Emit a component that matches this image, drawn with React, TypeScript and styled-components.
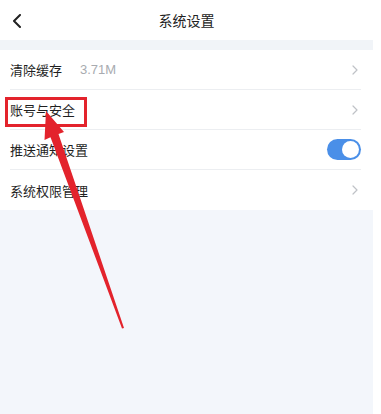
import React from "react";
import styled, { createGlobalStyle } from "styled-components";

const GlobalStyle = createGlobalStyle`
  html, body {
    margin: 0;
    padding: 0;
    background: #ffffff;
  }
  body {
    font-family: "Noto Sans CJK SC", "Noto Sans", "Liberation Sans", sans-serif;
    color: #222;
  }
`;

const Screen = styled.div`
  position: relative;
  width: 373px;
  height: 414px;
  overflow: hidden;
  background: #f3f6fb;
  display: flex;
  flex-direction: column;
`;

const NavBar = styled.header`
  position: relative;
  height: 40px;
  flex: 0 0 40px;
  background: #fff;
  display: flex;
  align-items: center;
  justify-content: center;
`;

const BackButton = styled.div`
  position: absolute;
  left: 12px;
  top: 14px;
  width: 10px;
  height: 14px;
  display: flex;
`;

const NavTitle = styled.h1`
  margin: 0;
  font-size: 14px;
  font-weight: 400;
  color: #222;
  line-height: 1;
`;

const Band = styled.div`
  height: 10px;
  flex: 0 0 10px;
  background: #f1f4f8;
`;

const List = styled.ul`
  list-style: none;
  margin: 0;
  padding: 0 12px 0 10px;
  background: #fff;
`;

const Row = styled.li<{ $last?: boolean }>`
  height: 40px;
  display: flex;
  align-items: center;
  border-bottom: ${(p) => (p.$last ? "none" : "1px solid #eceef1")};
  box-sizing: border-box;
`;

const Label = styled.span`
  font-size: 13px;
  color: #1f1f1f;
  line-height: 1;
`;

const Value = styled.span`
  margin-left: 18px;
  font-size: 13px;
  color: #a8abb0;
  font-family: "Liberation Sans", "Noto Sans", sans-serif;
  line-height: 1;
`;

const Spacer = styled.div`
  flex: 1;
`;

const Chevron = styled.div`
  width: 8px;
  height: 10px;
  margin-right: 2px;
  display: flex;
`;

const Toggle = styled.div<{ $on: boolean }>`
  width: 34px;
  height: 21px;
  border-radius: 11px;
  background: ${(p) => (p.$on ? "#4a8fe8" : "#dcdfe4")};
  display: flex;
  align-items: center;
  justify-content: ${(p) => (p.$on ? "flex-end" : "flex-start")};
  padding: 0 2px;
  box-sizing: border-box;
`;

const Knob = styled.div`
  width: 17px;
  height: 17px;
  border-radius: 50%;
  background: #fff;
`;

const Highlight = styled.div`
  position: absolute;
  left: 5px;
  top: 97px;
  width: 82px;
  height: 30px;
  border: 3px solid #e3232c;
  box-sizing: border-box;
  pointer-events: none;
`;

const Pointer = styled.svg`
  position: absolute;
  left: 0;
  top: 0;
  pointer-events: none;
`;

type Item = {
  label: string;
  value?: string;
  kind: "link" | "switch";
};

const items: Item[] = [
  { label: "清除缓存", value: "3.71M", kind: "link" },
  { label: "账号与安全", kind: "link" },
  { label: "推送通知设置", kind: "switch" },
  { label: "系统权限管理", kind: "link" },
];

export default function App() {
  return (
    <>
      <GlobalStyle />
      <Screen>
        <NavBar>
          <BackButton>
            <svg width="10" height="14" viewBox="0 0 10 14">
              <path d="M8 1 L2 7 L8 13" fill="none" stroke="#222" strokeWidth="2" strokeLinecap="round" strokeLinejoin="round" />
            </svg>
          </BackButton>
          <NavTitle>系统设置</NavTitle>
        </NavBar>
        <Band />
        <List>
          {items.map((item, i) => (
            <Row key={item.label} $last={i === items.length - 1}>
              <Label>{item.label}</Label>
              {item.value && <Value>{item.value}</Value>}
              <Spacer />
              {item.kind === "switch" ? (
                <Toggle $on>
                  <Knob />
                </Toggle>
              ) : (
                <Chevron>
                  <svg width="8" height="10" viewBox="0 0 8 10">
                    <path d="M2 1 L6 5 L2 9" fill="none" stroke="#bfc2c7" strokeWidth="1.2" strokeLinecap="round" strokeLinejoin="round" />
                  </svg>
                </Chevron>
              )}
            </Row>
          ))}
        </List>
        <Highlight />
        <Pointer width="373" height="414" viewBox="0 0 373 414">
          <polygon
            points="46,111 64,132 58.5,134 124,328 122,328.5 50.5,137.2 44.5,140"
            fill="#e3232c"
          />
        </Pointer>
      </Screen>
    </>
  );
}
